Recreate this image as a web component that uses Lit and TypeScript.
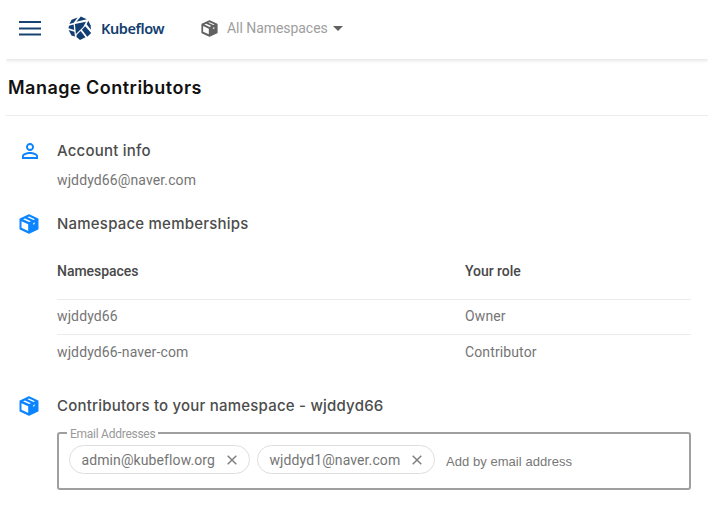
import { LitElement, html, css } from "lit";
import { customElement, property } from "lit/decorators.js";

@customElement("package-icon")
class PackageIcon extends LitElement {
  static styles = css`
    :host { display: block; }
    svg { display: block; width: 100%; height: 100%; }
    .face { fill: #fff; }
    .body { fill: currentColor; stroke: currentColor; }
  `;
  render() {
    return html`<svg viewBox="0 0 20 20">
      <path class="body" stroke-width="1.2" stroke-linejoin="round" d="M10 .9 18.9 5V15L10 19.1 1.1 15V5Z" />
      <path class="face" d="M2.5 7.200 9.200 10.300V16.900L2.5 13.800Z" />
      <path class="face" d="M4 5.300 6 4.400 12 7.200 10 8.100Z" />
      <path class="face" d="M8.500 3.200 10 2.500 16 5.300 14.500 6Z" />
      <path class="face" d="M14 9.200 15.800 8.300V9.900L14 10.800Z" opacity=".8" />
    </svg>`;
  }
}

@customElement("email-chip")
class EmailChip extends LitElement {
  @property() email = "";
  static styles = css`
    :host { display: flex; align-items: center; justify-content: space-between; box-sizing: border-box;
      height: 29px; padding: 0 12px 0 11.5px; border: 1px solid #dedede; border-radius: 15px;
      font: 14px/28px Roboto, sans-serif; letter-spacing: .1px; color: #757575; }
    svg { display: block; width: 10px; height: 10px; }
  `;
  render() {
    return html`<span>${this.email}</span>
      <svg viewBox="0 0 10 10"><path d="M.7.7 9.3 9.3M9.3.7.7 9.3" fill="none" stroke="#808080" stroke-width="1.5" /></svg>`;
  }
}

@customElement("app-root")
class AppRoot extends LitElement {
  static styles = css`
    :host { display: block; height: 506px; background: #fff; overflow: hidden;
      font-family: Roboto, sans-serif; color: #757575; font-size: 14px; }
    svg { display: block; }
    header { display: flex; align-items: center; box-sizing: border-box; height: 59px; margin-left: 6px;
      padding: 0 0 3px 13px; box-shadow: 0 1px 4px rgba(40, 40, 60, .17); clip-path: inset(0 0 -6px 0); }
    .menu { width: 22px; height: 15px; margin-right: 27px; }
    .logo { width: 24px; height: 24px; margin-right: 9px; }
    .brand { width: 100px; font: 600 14.5px/22px "Noto Sans", sans-serif; letter-spacing: -.4px; color: #123e6f; }
    .ns-icon { width: 17px; height: 17px; color: #616161; margin-right: 9px; }
    .ns { width: 106px; color: #9e9e9e; letter-spacing: -.05px; }
    .caret { width: 10px; height: 5px; }
    h1 { margin: 0 0 0 6px; padding: 1px 0 0 2px; height: 55px; line-height: 55px; border-bottom: 1px solid #ececec;
      font-family: Inter, sans-serif; font-weight: 600; font-size: 18px; letter-spacing: .48px; color: #111; }
    section { display: grid; grid-template-columns: 57px 634px; }
    h2 { margin: 0; font: 500 15px/22px Inter, sans-serif; letter-spacing: .21px; color: #4c4c4c; }
    .account { margin-top: 24px; }
    .icon { color: #0a84ff; margin-left: 19px; width: 20px; height: 20px; align-self: center; }
    .person { width: 16px; height: 16px; margin-left: 22px; align-self: center; }
    .mail { grid-column: 2; line-height: 20px; margin-top: 8px; letter-spacing: .12px; }
    .members { margin-top: 23px; }
    .table { grid-column: 2; margin-top: 18px; }
    .row { display: grid; grid-template-columns: 408px 1fr; box-sizing: border-box; height: 35px; line-height: 33px;
      border-top: 1px solid #ebebeb; letter-spacing: .12px; }
    .row.head { height: 46px; line-height: 36px; border: 0; font-weight: 500; letter-spacing: -.03px; color: #484848; }
    .row:last-child { line-height: 35px; }
    .contrib { margin-top: 26px; }
    .field { grid-column: 2; box-sizing: border-box; height: 65px; margin: 8px 0 0; padding: 0 0 0 8px;
      min-width: 0; border: 2px solid #9f9f9f; border-radius: 3px; }
    .field legend { padding: 0 3px; height: 16px; font-size: 12px; line-height: 18px; letter-spacing: -.26px; color: #999; }
    .chips { display: flex; align-items: center; padding: 4px 0 0 2px; }
    .c1 { width: 181px; margin-right: 7px; }
    .c2 { width: 178px; margin-right: 11px; }
    .hint { font: 13px/20px "Liberation Sans", Arial, sans-serif; letter-spacing: .05px; padding-top: 4px; color: #777; }
  `;

  private rows = [["wjddyd66", "Owner"], ["wjddyd66-naver-com", "Contributor"]];

  render() {
    return html`
      <header>
        <svg class="menu" viewBox="0 0 22 15"><path d="M0 1H22M0 7.500H22M0 13.500H22" stroke="#174472" stroke-width="2.200" /></svg>
        <svg class="logo" viewBox="0 0 24 24" fill="#123f73">
          <path d="M3.600 3.800 9.600 1.500 5.700 6.700 1.400 7.900Z" />
          <path d="M12.800.5 18.800 3.300 8.400 5.700Z" />
          <path d="M20.300 4.800 22.700 9.400 22.900 13.800 18.600 8.200Z" />
          <path d="M6.900 8 18 5.700 15.200 11 7.900 17.900Z" />
          <path d="M1 9.700 5.600 8.400 6.200 14 .5 12.300Z" />
          <path d="M.6 13.900 6.400 15.800 6.900 20.500 3.500 19.400Z" />
          <path d="M17.200 10.200 23.200 16.900 19.300 20.700 13.900 13.700Z" />
          <path d="M12.600 15 17.500 21.300 12 23.900 8.400 21 8.800 18.800Z" />
        </svg>
        <span class="brand">Kubeflow</span>
        <package-icon class="ns-icon"></package-icon>
        <span class="ns">All Namespaces</span>
        <svg class="caret" viewBox="0 0 10 5"><path d="M0 0H10L5 5Z" fill="#616161" /></svg>
      </header>
      <h1>Manage Contributors</h1>
      <section class="account">
        <svg class="person" viewBox="4 4 16 16" fill="#0a84ff"><path d="M12 5.900a2.100 2.100 0 1 1 0 4.200 2.100 2.100 0 0 1 0-4.200m0 9c2.970 0 6.100 1.460 6.100 2.100v1.100H5.900V17c0-.64 3.130-2.100 6.100-2.100M12 4C9.790 4 8 5.790 8 8s1.790 4 4 4 4-1.790 4-4-1.790-4-4-4zm0 9c-2.670 0-8 1.340-8 4v3h16v-3c0-2.660-5.330-4-8-4z" /></svg>
        <h2>Account info</h2>
        <div class="mail">wjddyd66@naver.com</div>
      </section>
      <section class="members">
        <package-icon class="icon"></package-icon>
        <h2>Namespace memberships</h2>
        <div class="table">
          <div class="row head"><span>Namespaces</span><span>Your role</span></div>
          ${this.rows.map(([name, role]) => html`<div class="row"><span>${name}</span><span>${role}</span></div>`)}
        </div>
      </section>
      <section class="contrib">
        <package-icon class="icon"></package-icon>
        <h2>Contributors to your namespace - wjddyd66</h2>
        <fieldset class="field">
          <legend>Email Addresses</legend>
          <div class="chips">
            <email-chip class="c1" email="admin@kubeflow.org"></email-chip>
            <email-chip class="c2" email="wjddyd1@naver.com"></email-chip>
            <span class="hint">Add by email address</span>
          </div>
        </fieldset>
      </section>`;
  }
}
